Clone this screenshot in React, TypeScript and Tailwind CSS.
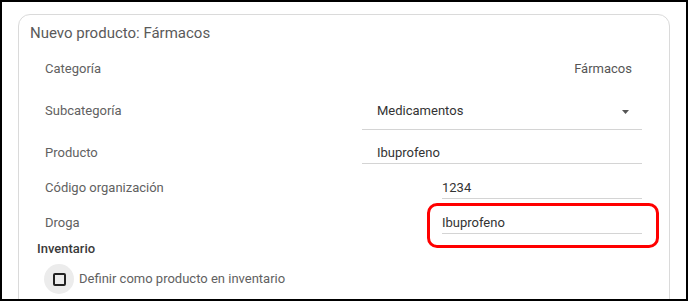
const font = { fontFamily: 'Roboto, "Liberation Sans", sans-serif' };

export default function App() {
  return (
    <div
      style={font}
      className="relative h-[301px] w-[688px] overflow-hidden border-2 border-black bg-white pl-[16px] pt-[12px]"
    >
      {/* Card */}
      <div className="h-[320px] w-[652px] rounded-[12px] border border-[#dadada] bg-white">
        <div className="pl-[11px] pt-[8px] text-[15px] leading-[20px] text-[#5a5a5a]">
          Nuevo producto: Fármacos
        </div>

        <div className="pl-[18px] pr-[27px] text-[13px] leading-[20px]">
          {/* Categoría */}
          <div className="mt-[16px] flex items-start justify-between pl-[8px]">
            <span className="text-[#616161]">Categoría</span>
            <span className="w-[280px] pr-[10px] text-right text-[#555]">Fármacos</span>
          </div>

          {/* Subcategoría */}
          <div className="mt-[22px] flex items-start justify-between pl-[8px]">
            <span className="text-[#616161]">Subcategoría</span>
            <div className="flex w-[280px] items-start justify-between border-b border-[#d4d4d4] pb-[8px] pl-[15px] pr-[13px]">
              <span className="text-[#333]">Medicamentos</span>
              <svg width="7" height="4" viewBox="0 0 7 4" className="mt-[9px]">
                <polygon points="0,0 7,0 3.5,4" fill="#555" />
              </svg>
            </div>
          </div>

          {/* Producto */}
          <div className="mt-[13px] flex items-start justify-between pl-[8px]">
            <span className="text-[#616161]">Producto</span>
            <div className="w-[280px] border-b border-[#d4d4d4] pl-[15px] text-[#333]">Ibuprofeno</div>
          </div>

          {/* Código organización */}
          <div className="mt-[14px] flex items-start justify-between pl-[8px]">
            <span className="text-[#616161]">Código organización</span>
            <div className="w-[200px] border-b border-[#d4d4d4] text-[#333]">1234</div>
          </div>

          {/* Droga */}
          <div className="mt-[14px] flex items-start justify-between pl-[8px]">
            <span className="text-[#616161]">Droga</span>
            <div className="w-[200px] border-b border-[#d4d4d4] text-[#333]">Ibuprofeno</div>
          </div>

          <div className="mt-[5px] font-medium text-[#3a3a3a]">Inventario</div>

          <div className="mt-[5px] flex items-center pl-[7px]">
            <div className="flex h-[30px] w-[30px] items-center justify-center rounded-full bg-[#ececec]">
              <div className="h-[13px] w-[13px] rounded-[2px] border-2 border-[#222]" />
            </div>
            <span className="ml-[5px] text-[#616161]">Definir como producto en inventario</span>
          </div>
        </div>
      </div>

      {/* Highlight annotation */}
      <div className="absolute left-[425px] top-[201px] h-[45px] w-[232px] rounded-[10px] border-[3px] border-[#ff0000]" />
    </div>
  );
}
